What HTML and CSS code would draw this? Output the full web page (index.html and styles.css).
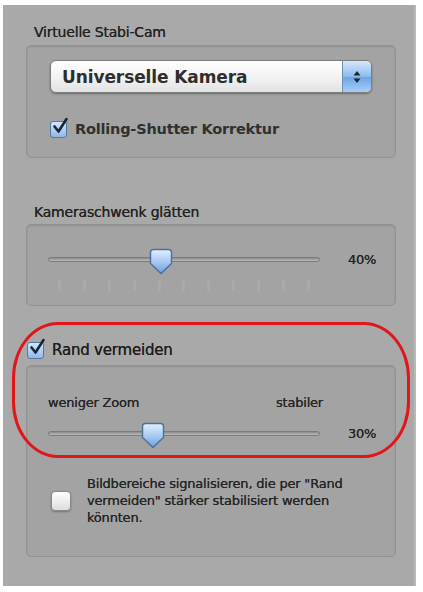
FILE: index.html
```html
<!DOCTYPE html>
<html lang="de">
<head>
<meta charset="utf-8">
<title>Stabilisierung</title>
<link rel="stylesheet" href="styles.css">
</head>
<body>
<div class="panel">
  <div class="title">Virtuelle Stabi-Cam</div>
  <div class="box box1">
    <div class="popup">
      <span class="popup-text">Universelle Kamera</span>
      <span class="popup-arrows">
        <svg width="10" height="16" viewBox="0 0 10 16"><path d="M5 2 L8.5 6.5 H1.5 Z" fill="#1c2430"/><path d="M5 14 L8.5 9.5 H1.5 Z" fill="#1c2430"/></svg>
      </span>
    </div>
    <div class="check-row">
      <span class="cb cb-on"><svg width="20" height="20" viewBox="0 0 20 20"><path d="M4.5 9.5 L8.5 14.5 L16.5 2" fill="none" stroke="#17263a" stroke-width="2.6" stroke-linecap="round" stroke-linejoin="round"/></svg></span>
      <span class="check-label">Rolling-Shutter Korrektur</span>
    </div>
  </div>

  <div class="title title2">Kameraschwenk glätten</div>
  <div class="box box2">
    <div class="slider-row">
      <div class="track">
        <span class="thumb" style="left: 100px"><svg width="24" height="27" viewBox="0 0 24 27"><defs><linearGradient id="tg1" x1="0" y1="0" x2="0" y2="1"><stop offset="0" stop-color="#e3efff"/><stop offset="0.5" stop-color="#a9cbf2"/><stop offset="1" stop-color="#6d9fdc"/></linearGradient></defs><path d="M4.5 1.5 H19.5 Q22.5 1.5 22.5 4.5 V15.5 L12 25.5 L1.5 15.5 V4.5 Q1.5 1.5 4.5 1.5 Z" fill="url(#tg1)" stroke="#4d6f98" stroke-width="1.4"/></svg></span>
      </div>
      <span class="pct">40%</span>
    </div>
    <div class="ticks">
      <i></i><i></i><i></i><i></i><i></i><i></i><i></i><i></i><i></i><i></i><i></i>
    </div>
  </div>

  <div class="check-row rand-row">
    <span class="cb cb-on"><svg width="20" height="20" viewBox="0 0 20 20"><path d="M4.5 9.5 L8.5 14.5 L16.5 2" fill="none" stroke="#17263a" stroke-width="2.6" stroke-linecap="round" stroke-linejoin="round"/></svg></span>
    <span class="check-label">Rand vermeiden</span>
  </div>
  <div class="box box3">
    <div class="range-labels">
      <span>weniger Zoom</span>
      <span>stabiler</span>
    </div>
    <div class="slider-row slider-row2">
      <div class="track">
        <span class="thumb" style="left: 92px"><svg width="24" height="27" viewBox="0 0 24 27"><defs><linearGradient id="tg2" x1="0" y1="0" x2="0" y2="1"><stop offset="0" stop-color="#e3efff"/><stop offset="0.5" stop-color="#a9cbf2"/><stop offset="1" stop-color="#6d9fdc"/></linearGradient></defs><path d="M4.5 1.5 H19.5 Q22.5 1.5 22.5 4.5 V15.5 L12 25.5 L1.5 15.5 V4.5 Q1.5 1.5 4.5 1.5 Z" fill="url(#tg2)" stroke="#4d6f98" stroke-width="1.4"/></svg></span>
      </div>
      <span class="pct">30%</span>
    </div>
    <div class="signal-row">
      <span class="cb-off"></span>
      <span class="signal-text">Bildbereiche signalisieren, die per "Rand<br>vermeiden" stärker stabilisiert werden<br>könnten.</span>
    </div>
  </div>

  <div class="highlight"></div>
</div>
</body>
</html>
```

FILE: styles.css
```css
html, body {
  margin: 0;
  padding: 0;
  background: #ffffff;
}

body {
  font-family: "DejaVu Sans", "Liberation Sans", sans-serif;
  color: #1e1e1e;
}

.panel {
  position: relative;
  margin: 5px 7px 0 3px;
  height: 581px;
  background: #a9a9a9;
  box-sizing: border-box;
  padding: 17px 18px 0 23px;
  display: flex;
  flex-direction: column;
  border-right: 2px solid #b8b8b8;
}

.title {
  font-size: 14px;
  line-height: 20px;
  padding-left: 8px;
  color: #232323;
  letter-spacing: -0.2px;
  text-shadow: 0 0 0.4px #232323;
}

.title2 {
  margin-top: 44px;
}

.box {
  box-sizing: border-box;
  background: #a3a3a3;
  border: 1px solid #929292;
  border-radius: 5px;
  box-shadow: inset 0 1px 2px rgba(0, 0, 0, 0.12);
}

.box1 {
  margin-top: 3px;
  height: 113px;
  padding: 14px 0 0 23px;
}

.popup {
  width: 322px;
  height: 33px;
  box-sizing: border-box;
  border-radius: 6px;
  background: linear-gradient(#ffffff, #f2f2f2 55%, #e2e2e2);
  border: 1px solid #7d7d7d;
  box-shadow: 0 1px 2px rgba(0, 0, 0, 0.35);
  display: flex;
  align-items: center;
  overflow: hidden;
}

.popup-text {
  flex: 1;
  padding-left: 11px;
  font-size: 17px;
  font-weight: bold;
  color: #2e2e2e;
  letter-spacing: -0.1px;
}

.popup-arrows {
  width: 28px;
  align-self: stretch;
  display: flex;
  align-items: center;
  justify-content: center;
  background: linear-gradient(#d6e8fb, #8dbbef 50%, #6aa5e8 51%, #a8cdf4);
  border-left: 1px solid #6b8fb8;
}

.check-row {
  display: flex;
  align-items: center;
  height: 20px;
}

.box1 .check-row {
  margin-top: 26px;
  margin-left: 0;
}

.cb {
  width: 17px;
  height: 17px;
  box-sizing: border-box;
  border: 1px solid #56779f;
  border-radius: 3px;
  background: linear-gradient(#d4e6fb, #8fb9ea);
  position: relative;
  flex: none;
}

.cb svg {
  position: absolute;
  left: -1px;
  top: -5px;
}

.check-label {
  margin-left: 8px;
  font-size: 14.5px;
  font-weight: bold;
  color: #303030;
  letter-spacing: -0.2px;
}

.box2 {
  margin-top: 2px;
  height: 82px;
  padding: 0 0 0 21px;
}

.slider-row {
  display: flex;
  align-items: center;
  height: 24px;
  margin-top: 22px;
}

.track {
  position: relative;
  width: 272px;
  height: 5px;
  box-sizing: border-box;
  border-radius: 3px;
  background: linear-gradient(#8a8a8a, #bdbdbd);
  border: 1px solid #7c7c7c;
}

.thumb {
  position: absolute;
  top: -10px;
  width: 24px;
  height: 27px;
}

.pct {
  margin-left: 28px;
  font-size: 13px;
  color: #222;
  letter-spacing: -0.3px;
  text-shadow: 0 0 0.4px #222;
}

.ticks {
  width: 272px;
  margin-top: 9px;
  display: flex;
  justify-content: space-between;
  padding: 0 10px;
  box-sizing: border-box;
}

.ticks i {
  display: block;
  width: 3px;
  height: 11px;
  background: #aaaaaa;
  border-radius: 1px;
}

.rand-row {
  margin-top: 34px;
  padding-left: 1px;
}

.rand-row .check-label {
  margin-left: 8px;
  font-weight: normal;
  font-size: 15px;
  color: #1e1e1e;
  text-shadow: 0 0 0.5px #1e1e1e;
}

.box3 {
  margin-top: 5px;
  height: 192px;
  padding: 28px 0 0 21px;
}

.range-labels {
  width: 275px;
  display: flex;
  justify-content: space-between;
  font-size: 13px;
  line-height: 18px;
  color: #262626;
  letter-spacing: -0.2px;
  text-shadow: 0 0 0.4px #262626;
}

.slider-row2 {
  margin-top: 9px;
}

.signal-row {
  display: flex;
  align-items: center;
  margin-top: 30px;
  margin-left: 3px;
}

.cb-off {
  width: 20px;
  height: 20px;
  box-sizing: border-box;
  border-radius: 4px;
  border: 1px solid #8a8a8a;
  background: linear-gradient(#ffffff, #dcdcdc);
  box-shadow: 0 1px 2px rgba(0, 0, 0, 0.3);
  flex: none;
}

.signal-text {
  margin-left: 16px;
  font-size: 13px;
  line-height: 17px;
  color: #262626;
  letter-spacing: -0.2px;
  text-shadow: 0 0 0.4px #262626;
}

.highlight {
  position: absolute;
  left: 9px;
  top: 317px;
  width: 398px;
  height: 136px;
  box-sizing: border-box;
  border: 3px solid #e0161b;
  border-radius: 46px / 56px;
  pointer-events: none;
}
```
